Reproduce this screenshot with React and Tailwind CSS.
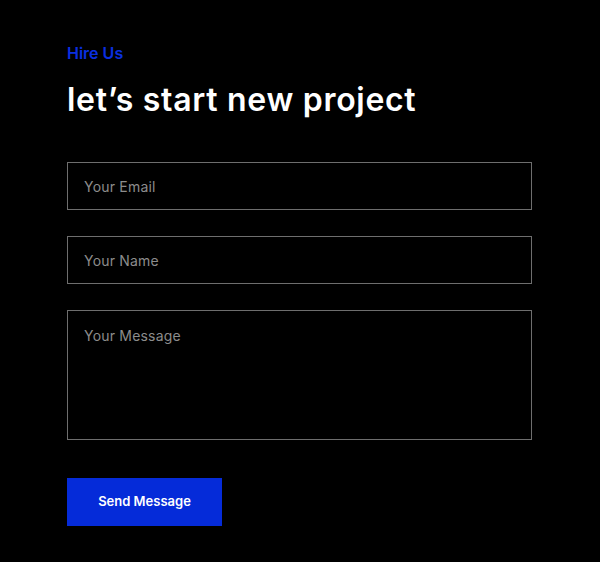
export default function App() {
  return (
    <div className="min-h-[562px] w-[600px] bg-black pl-[67px] pt-[43px] font-['Inter',sans-serif]">
      <p className="text-[16px] font-semibold leading-[20px] text-[#0a2fe0]">Hire Us</p>
      <h1 className="mt-[17px] text-[32px] font-semibold leading-[40px] tracking-[0.7px] text-white">let’s start new project</h1>
      <form className="mt-[42px] flex w-[465px] flex-col gap-[26px]">
        <div className="flex h-[48px] items-center border border-[#6e6e6e] px-[16px] text-[14px] tracking-[0.2px] text-[#8c8c8c]">Your Email</div>
        <div className="flex h-[48px] items-center border border-[#6e6e6e] px-[16px] text-[14px] tracking-[0.2px] text-[#8c8c8c]">Your Name</div>
        <div className="h-[130px] border border-[#6e6e6e] px-[16px] pt-[14px] text-[14px] tracking-[0.2px] text-[#8c8c8c]">Your Message</div>
        <button type="button" className="mt-[12px] flex h-[48px] w-[155px] items-center justify-center bg-[#052bd9] text-[13px] font-semibold text-white">Send Message</button>
      </form>
    </div>
  );
}
